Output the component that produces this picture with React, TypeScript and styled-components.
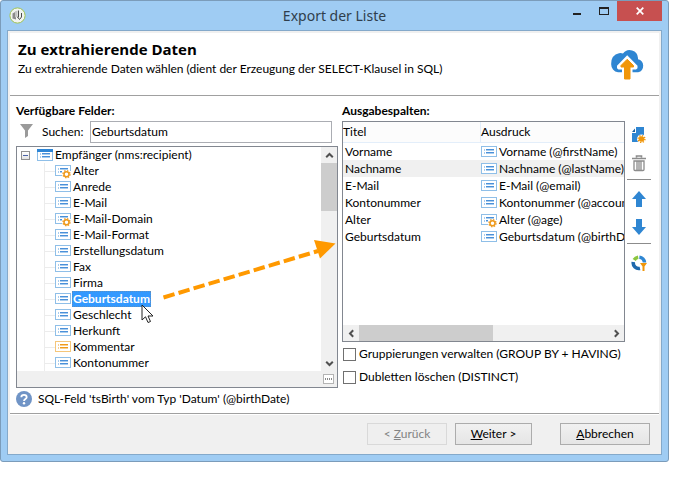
import React, { useState } from "react";
import styled, { createGlobalStyle, css } from "styled-components";

const GlobalStyle = createGlobalStyle`
  *, *::before, *::after { box-sizing: border-box; }
  body {
    margin: 0;
    background: #fff;
    color: #000;
    font: 12px/16px Lato, "Open Sans", sans-serif;
  }
  button, input { font: inherit; color: inherit; }
  svg { flex: none; }
`;

const Window = styled.div`
  display: flex;
  flex-direction: column;
  min-height: calc(100vh - 32px);
  margin: 0 30px 32px 0;
  padding: 0 6px 6px;
  border: 1px solid #7b9cba;
  border-radius: 3px;
  background: #9fccf3;
`;

const TitleBar = styled.header`
  display: grid;
  grid-template-columns: 1fr auto 1fr;
  height: 29px;
`;

const TitleText = styled.div`
  font-family: "Noto Sans", sans-serif;
  font-size: 14px;
  line-height: 30px;
  color: #2f3e4c;
`;

const WindowControls = styled.div`
  display: flex;
  justify-content: flex-end;
  align-items: flex-start;
`;

const CaptionButton = styled.button<{ $close?: boolean }>`
  display: grid;
  place-items: center;
  width: ${(p) => (p.$close ? 45 : 27)}px;
  height: 20px;
  padding: 0;
  border: 0;
  background: ${(p) => (p.$close ? "#c75050" : "transparent")};
`;

const AppIcon = styled.svg`
  margin: 6px 0 0 2px;
`;

const Client = styled.main`
  flex: 1;
  display: flex;
  flex-direction: column;
  padding: 2px 2px 0;
  border: 1px solid #84a9ca;
  background: #f0f0f0;
`;

const Intro = styled.section`
  display: flex;
  justify-content: space-between;
  height: 63px;
  padding: 4px 15px 0 8px;
  border-bottom: 1px solid #a0a0a0;
  background: #fff;

  h1 { margin: 0; font: 700 15px/24px "Open Sans", sans-serif; }
  p { margin: 0; }
  svg { margin-top: 11px; }
`;

const Body = styled.section`
  flex: 1;
  display: flex;
  flex-direction: column;
  padding: 7px 8px 6px 6px;
  border-bottom: 1px solid #a0a0a0;
  background: #fff;
`;

const Panels = styled.div`
  flex: 1;
  display: grid;
  grid-template-columns: minmax(0, 322fr) 4px minmax(0, 283fr) 2px 24px;
`;

const Panel = styled.div<{ $column: number }>`
  grid-column: ${(p) => p.$column};
  display: flex;
  flex-direction: column;
`;

const PanelTitle = styled.h2`
  margin: 0 0 2px;
  font-size: 12px;
  line-height: 16px;
`;

const SearchRow = styled.div`
  display: flex;
  align-items: center;
  margin: 0 6px 3px 0;
  svg { margin: 0 8px 4px 3px; }
`;

const SearchLabel = styled.label`
  width: 48px;
`;

const SearchInput = styled.input`
  flex: 1;
  min-width: 0;
  height: 22px;
  padding: 0 1px 1px;
  border: 1px solid #abadb3;
  background: #fff;
`;

const TreeBox = styled.div`
  position: relative;
  flex: 1;
  display: grid;
  grid-template: 1fr 16px / 1fr 16px;
  border: 1px solid #828790;
  background: #fff;
`;

const Tree = styled.ul`
  margin: 0;
  padding: 0 0 0 4px;
  list-style: none;
`;

const RootRow = styled.div`
  display: flex;
  align-items: center;
  height: 16px;
  gap: 2px;
`;

const Expander = styled.button`
  display: grid;
  place-items: center;
  width: 9px;
  height: 9px;
  margin-right: 5px;
  padding: 0;
  border: 1px solid #919191;
  background: linear-gradient(#fff, #e4e4e4);
  span { width: 5px; height: 1px; background: #4b63a7; }
`;

const Branch = styled.ul`
  margin: 0 0 0 23px;
  padding: 0;
  border-left: 1px solid #ececec;
  list-style: none;
`;

const Leaf = styled.li`
  display: flex;
  align-items: center;
  height: 16px;
  &::before { content: ""; width: 10px; height: 1px; background: #ececec; }
`;

const LeafButton = styled.button<{ $selected: boolean }>`
  position: relative;
  height: 16px;
  margin-left: 1px;
  padding: 0 1px;
  border: 0;
  background: none;
  line-height: 16px;
  ${(p) =>
    p.$selected &&
    css`
      background: #3399ff;
      color: #fff;
      font-weight: 700;
      outline: 1px dotted #5a8fc4;
      outline-offset: -1px;
    `}
`;

const Pointer = styled.svg`
  position: absolute;
  left: 69px;
  top: 13px;
  z-index: 2;
`;

const ScrollBar = styled.div<{ $horizontal?: boolean }>`
  display: flex;
  flex-direction: ${(p) => (p.$horizontal ? "row" : "column")};
  background: #f0f0f0;
`;

const ScrollButton = styled.button`
  flex: none;
  display: grid;
  place-items: center;
  width: 16px;
  height: 16px;
  padding: 0;
  border: 0;
  background: none;
`;

const ScrollTrack = styled.div<{ $horizontal?: boolean }>`
  flex: 1;
  display: flex;
  &::before {
    content: "";
    background: #cdcdcd;
    width: ${(p) => (p.$horizontal ? "54%" : "100%")};
    height: ${(p) => (p.$horizontal ? "100%" : "25%")};
  }
`;

const TreeFooter = styled.div`
  grid-column: 1 / -1;
  display: flex;
  justify-content: flex-end;
  align-items: center;
  padding-right: 3px;
  background: #f0f0f0;
`;

const MoreButton = styled.button`
  display: grid;
  place-items: center;
  width: 11px;
  height: 10px;
  padding: 0;
  border: 1px solid #b4b4b4;
  background: #fff;
`;

const DragArrow = styled.svg`
  position: absolute;
  right: -1px;
  top: 92px;
  z-index: 1;
  pointer-events: none;
`;

const OutputBox = styled.div`
  flex: 1;
  display: flex;
  flex-direction: column;
  justify-content: space-between;
  border: 1px solid #828790;
  overflow: hidden;
`;

const OutputTable = styled.table`
  width: 100%;
  table-layout: fixed;
  border-collapse: separate;
  border-spacing: 0;

  th {
    height: 21px;
    padding: 0;
    border-bottom: 1px solid #e3eefa;
    background: #fcfcfc;
    font-weight: 400;
    text-align: left;
  }
  th + th { border-left: 1px solid #e3eefa; }
  th:first-child { width: 137px; }
  td {
    height: 17px;
    padding: 0 0 0 2px;
    overflow: hidden;
    white-space: nowrap;
  }
  td + td { padding-left: 1px; }
`;

const OutputRow = styled.tr<{ $shaded?: boolean }>`
  background: ${(p) => (p.$shaded ? "#f0f0f0" : "#fff")};
`;

const Expression = styled.span`
  display: flex;
  align-items: center;
  height: 17px;
  gap: 2px;
`;

const CheckLabel = styled.label`
  display: flex;
  align-items: center;
  height: 23px;
  gap: 3px;
  padding: 1px 0 0 1px;
  white-space: nowrap;
`;

const CheckBox = styled.input`
  appearance: none;
  width: 13px;
  height: 13px;
  margin: 0;
  border: 1px solid #707070;
  background: #fff;
  &:checked { background: #3399ff; }
`;

const ToolStrip = styled.div`
  grid-column: 5;
  display: flex;
  flex-direction: column;
  margin-top: 18px;
`;

const ToolButton = styled.button`
  display: grid;
  place-items: center;
  height: 28px;
  padding: 0;
  border: 0;
  background: none;
`;

const ToolRule = styled.hr`
  width: 100%;
  height: 1px;
  margin: 2px 0 5px;
  border: 0;
  background: #8c8c8c;
`;

const HelpRow = styled.div`
  display: flex;
  align-items: center;
  gap: 6px;
  margin-top: 3px;
`;

const Footer = styled.footer`
  display: flex;
  justify-content: flex-end;
  gap: 8px;
  padding: 8px 9px 9px;
  border-top: 1px solid #fff;
`;

const PushButton = styled.button<{ $width: number; $apart?: boolean }>`
  width: ${(p) => p.$width}px;
  height: 22px;
  margin-left: ${(p) => (p.$apart ? 20 : 0)}px;
  padding: 0;
  border: 1px solid #acacac;
  background: linear-gradient(#f1f1f1, #e5e5e5);
  line-height: 18px;
  &:disabled { border-color: #d9d9d9; background: #efefef; color: #838383; }
`;

type FieldKind = "plain" | "computed" | "memo" | "schema";

function FieldIcon({ kind = "plain" }: { kind?: FieldKind }) {
  const memo = kind === "memo";
  const line = memo ? "#f5c67a" : "#8fbfe8";
  const dark = memo ? "#f09a1a" : "#4a90d9";
  const light = memo ? "#f8cf90" : "#a9cdee";
  return (
    <svg width="16" height="16" viewBox="0 0 16 16" shapeRendering="crispEdges" aria-hidden="true">
      {kind === "schema" ? (
        <>
          <rect x="0.5" y="2.5" width="15" height="11" fill="#fff" stroke="#8fbfe8" />
          <rect x="0" y="2" width="16" height="3" fill="#2e86d6" />
        </>
      ) : (
        <rect x="0.5" y="2.5" width="15" height="10" fill="#fff" stroke={line} />
      )}
      <g transform={kind === "schema" ? "translate(0 1)" : undefined}>
        <path d="M3 5h1v2H3zM3 8h1v2H3z" fill={light} />
        <path d="M5 5h8v1H5zM5 8h8v1H5z" fill={dark} />
        <path d="M5 6h8v1H5zM5 9h8v1H5z" fill={light} />
      </g>
      {kind === "computed" && (
        <g shapeRendering="auto">
          <rect x="7" y="8" width="9" height="8" fill="#fff" />
          <circle cx="11.5" cy="11.2" r="3.5" fill="#fff" stroke="#f0a030" strokeWidth="1.6" strokeDasharray="1.4 1.35" />
          <circle cx="11.5" cy="11.2" r="2.5" fill="#fff" stroke="#ee9a1c" strokeWidth="1.5" />
        </g>
      )}
    </svg>
  );
}

function Chevron({ turn = 0 }: { turn?: number }) {
  return (
    <svg width="9" height="9" viewBox="0 0 9 9" aria-hidden="true">
      <path d="M1.2 6.2 4.5 3l3.3 3.2" transform={`rotate(${turn} 4.5 4.5)`} fill="none" stroke="#505050" strokeWidth="2" />
    </svg>
  );
}

const fields: { name: string; kind?: FieldKind }[] = [
  { name: "Alter", kind: "computed" },
  { name: "Anrede" },
  { name: "E-Mail" },
  { name: "E-Mail-Domain", kind: "computed" },
  { name: "E-Mail-Format" },
  { name: "Erstellungsdatum" },
  { name: "Fax" },
  { name: "Firma" },
  { name: "Geburtsdatum" },
  { name: "Geschlecht" },
  { name: "Herkunft" },
  { name: "Kommentar", kind: "memo" },
  { name: "Kontonummer" },
];

const outputs: { title: string; expression: string; kind?: FieldKind }[] = [
  { title: "Vorname", expression: "Vorname (@firstName)" },
  { title: "Nachname", expression: "Nachname (@lastName)" },
  { title: "E-Mail", expression: "E-Mail (@email)" },
  { title: "Kontonummer", expression: "Kontonummer (@account)" },
  { title: "Alter", expression: "Alter (@age)", kind: "computed" },
  { title: "Geburtsdatum", expression: "Geburtsdatum (@birthDate)" },
];

export default function App() {
  const [query, setQuery] = useState("Geburtsdatum");
  const [selected, setSelected] = useState("Geburtsdatum");

  return (
    <>
      <GlobalStyle />
      <Window>
        <TitleBar>
          <AppIcon width="17" height="17" viewBox="0 0 17 17" aria-hidden="true">
            <circle cx="8.5" cy="8.5" r="7.6" fill="#f2f4f0" stroke="#a3c552" />
            <path d="M3.5 6.5 7 4.5v8l-3.5-1z" fill="#8a8a8a" />
            <path d="M6 4.500 8.500 3.500v6L6 10.500z" fill="#c4c4c4" />
            <path d="M9.500 3.500v6.500h-1l2 2.500 2-2.500V6" fill="none" stroke="#4c4c4c" />
          </AppIcon>
          <TitleText>Export der Liste</TitleText>
          <WindowControls>
            <CaptionButton aria-label="Minimieren">
              <svg width="10" height="10" viewBox="0 0 10 10"><path d="M1 7h8v2H1z" fill="#222" /></svg>
            </CaptionButton>
            <CaptionButton aria-label="Maximieren">
              <svg width="10" height="8" viewBox="0 0 10 8" shapeRendering="crispEdges">
                <path d="M0 0h10v8H0zM1 2v5h8V2z" fill="#222" fillRule="evenodd" />
              </svg>
            </CaptionButton>
            <CaptionButton $close aria-label="Schließen">
              <svg width="8" height="8" viewBox="0 0 8 8"><path d="M.7.7l6.6 6.6M7.3.7.7 7.3" stroke="#fff" strokeWidth="1.7" /></svg>
            </CaptionButton>
          </WindowControls>
        </TitleBar>

        <Client>
          <Intro>
            <div>
              <h1>Zu extrahierende Daten</h1>
              <p>Zu extrahierende Daten wählen (dient der Erzeugung der SELECT-Klausel in SQL)</p>
            </div>
            <svg width="33" height="32" viewBox="0 0 33 32" aria-hidden="true">
              <path d="M7 24.300a8 8 0 0 1-6.800-8.300Q0 7 8 5.200q2.200-.4 4 .3a8.300 8.300 0 0 1 15 4.500v1.300q5 1.200 5.200 6.200 0 5.500-5 6.800z" fill="#2f86d2" />
              <path d="M16.200 7.200 26.500 17.800v2.500l-1.500 1.200h-3.500V32h-10.500V21.500H7.500L6 20.300v-2.500z" fill="#fff" />
              <path d="M16.200 11.300 22.500 17.500v1.500H19V31h-5.500V19H10v-1.500z" fill="#f0960a" stroke="#f0960a" strokeLinejoin="round" />
            </svg>
          </Intro>

          <Body>
            <Panels>
              <Panel $column={1}>
                <PanelTitle>Verfügbare Felder:</PanelTitle>
                <SearchRow>
                  <svg width="15" height="15" viewBox="0 0 15 15" aria-hidden="true">
                    <path d="M1 1h13L9 7.500V13l-3 2V7.500z" fill="#9a9a9a" />
                  </svg>
                  <SearchLabel htmlFor="field-search">Suchen:</SearchLabel>
                  <SearchInput id="field-search" value={query} onChange={(e) => setQuery(e.target.value)} />
                </SearchRow>
                <TreeBox>
                  <Tree>
                    <li>
                      <RootRow>
                        <Expander aria-label="Empfänger reduzieren"><span /></Expander>
                        <FieldIcon kind="schema" />
                        <span>Empfänger (nms:recipient)</span>
                      </RootRow>
                      <Branch>
                        {fields.map((f) => (
                          <Leaf key={f.name}>
                            <FieldIcon kind={f.kind} />
                            <LeafButton $selected={selected === f.name} onClick={() => setSelected(f.name)}>
                              {f.name}
                              {selected === f.name && (
                                <Pointer width="13" height="20" viewBox="0 0 13 20" aria-hidden="true">
                                  <path d="M1 1v15l3.500-3.200L7 18.500l2.500-1-2.500-5.500h5z" fill="#fff" stroke="#222" />
                                </Pointer>
                              )}
                            </LeafButton>
                          </Leaf>
                        ))}
                      </Branch>
                    </li>
                  </Tree>
                  <ScrollBar>
                    <ScrollButton aria-label="Nach oben"><Chevron /></ScrollButton>
                    <ScrollTrack />
                    <ScrollButton aria-label="Nach unten"><Chevron turn={180} /></ScrollButton>
                  </ScrollBar>
                  <TreeFooter>
                    <MoreButton aria-label="Mehr">
                      <svg width="7" height="2" viewBox="0 0 7 2"><path d="M0 0h1v2H0zM2 0h1v2H2zM4 0h1v2H4zM6 0h1v2H6z" fill="#888" /></svg>
                    </MoreButton>
                  </TreeFooter>
                  <DragArrow width="176" height="62" viewBox="0 0 176 62" aria-hidden="true">
                    <path d="M1.500 58.500 156 12" fill="none" stroke="#ff9900" strokeWidth="4" strokeDasharray="11.500 4.200" />
                    <path d="M152 1 173.500 4.500 158 19.500z" fill="#ff9900" />
                  </DragArrow>
                </TreeBox>
              </Panel>

              <Panel $column={3}>
                <PanelTitle>Ausgabespalten:</PanelTitle>
                <OutputBox>
                  <OutputTable>
                    <thead>
                      <tr><th>Titel</th><th>Ausdruck</th></tr>
                    </thead>
                    <tbody>
                      {outputs.map((o, i) => (
                        <OutputRow key={o.title} $shaded={i === 1}>
                          <td>{o.title}</td>
                          <td><Expression><FieldIcon kind={o.kind} /><span>{o.expression}</span></Expression></td>
                        </OutputRow>
                      ))}
                    </tbody>
                  </OutputTable>
                  <ScrollBar $horizontal>
                    <ScrollButton aria-label="Nach links"><Chevron turn={-90} /></ScrollButton>
                    <ScrollTrack $horizontal />
                    <ScrollButton aria-label="Nach rechts"><Chevron turn={90} /></ScrollButton>
                  </ScrollBar>
                </OutputBox>
                <CheckLabel><CheckBox type="checkbox" />Gruppierungen verwalten (GROUP BY + HAVING)</CheckLabel>
                <CheckLabel><CheckBox type="checkbox" />Dubletten löschen (DISTINCT)</CheckLabel>
              </Panel>

              <ToolStrip>
                <ToolButton aria-label="Hinzufügen">
                  <svg width="16" height="16" viewBox="0 0 16 16">
                    <path d="M5 0h8v9h-4v6H1V6h4z" fill="#2f86d2" />
                    <path d="M1 5 4 1.500V5z" fill="#1c5f9e" />
                    <circle cx="10.500" cy="12" r="4.500" fill="#fff" />
                    <circle cx="10.500" cy="12" r="3.400" fill="none" stroke="#f0960a" strokeWidth="1.400" strokeDasharray="1.300 1.370" />
                    <circle cx="10.500" cy="12" r="2.800" fill="#f0960a" />
                  </svg>
                </ToolButton>
                <ToolButton aria-label="Löschen">
                  <svg width="16" height="17" viewBox="0 0 16 17">
                    <path d="M5.500 2.500V1h5v1.500M1 3.500h14" fill="none" stroke="#8c8c8c" strokeWidth="1.600" />
                    <path d="M3 6h10v8.500q0 1-1 1H4q-1 0-1-1zM6 6v9M8 6v9M10 6v9" fill="none" stroke="#8c8c8c" strokeWidth="1.300" />
                  </svg>
                </ToolButton>
                <ToolRule />
                <ToolButton aria-label="Nach oben verschieben">
                  <svg width="14" height="16" viewBox="0 0 14 16"><path d="M7 0l7 8h-4v8H4V8H0z" fill="#2f86d2" /></svg>
                </ToolButton>
                <ToolButton aria-label="Nach unten verschieben">
                  <svg width="14" height="16" viewBox="0 0 14 16"><path d="M7 16l7-8h-4V0H4v8H0z" fill="#2f86d2" /></svg>
                </ToolButton>
                <ToolRule />
                <ToolButton aria-label="Verteilung der Werte">
                  <svg width="16" height="16" viewBox="0 0 16 16">
                    <g fill="none" strokeWidth="3.600">
                      <path d="M9 13.400A5.600 5.600 0 0 1 2.300 7" stroke="#1f69ad" />
                      <path d="M3.200 5A5.600 5.600 0 0 1 7.200 2.200" stroke="#8cc63f" />
                      <path d="M8.400 2.200A5.600 5.600 0 0 1 13.500 7.500" stroke="#2f86d2" />
                    </g>
                    <path d="M9 8h7l-2.500 3.500V16h-2v-4.500z" fill="#f0960a" />
                  </svg>
                </ToolButton>
              </ToolStrip>
            </Panels>
            <HelpRow>
              <svg width="16" height="16" viewBox="0 0 16 16" aria-hidden="true">
                <circle cx="8" cy="8" r="8" fill="#7094c6" />
                <path d="M5.300 6.200C5.300 3 10.700 3 10.700 6.200 10.700 8 8 8 8 10" fill="none" stroke="#fff" strokeWidth="1.800" />
                <circle cx="8" cy="12.300" r="1.200" fill="#fff" />
              </svg>
              <span>SQL-Feld 'tsBirth' vom Typ 'Datum' (@birthDate)</span>
            </HelpRow>
          </Body>

          <Footer>
            <PushButton $width={80} disabled>&lt; <u>Z</u>urück</PushButton>
            <PushButton $width={77}><u>W</u>eiter &gt;</PushButton>
            <PushButton $width={90} $apart><u>A</u>bbrechen</PushButton>
          </Footer>
        </Client>
      </Window>
    </>
  );
}
